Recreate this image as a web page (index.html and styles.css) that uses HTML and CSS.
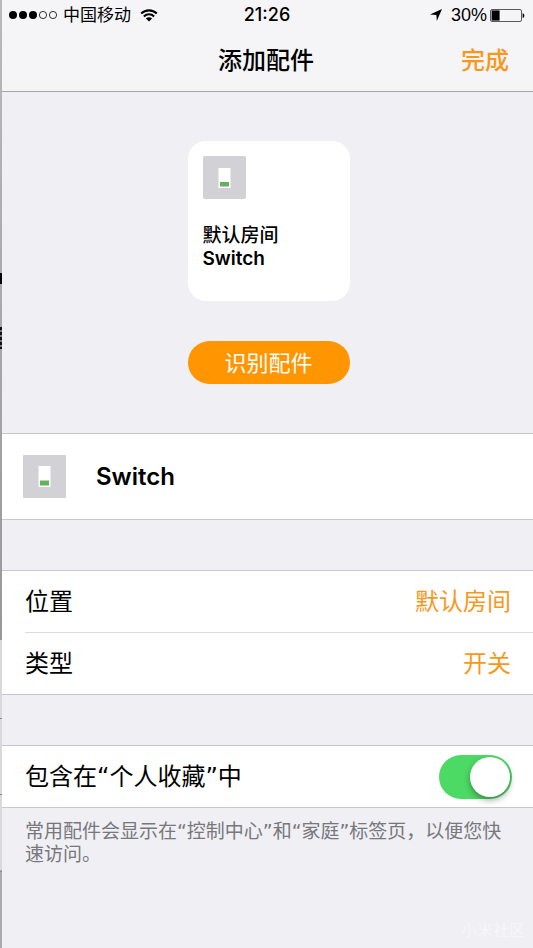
FILE: index.html
```html
<!DOCTYPE html>
<html lang="zh-CN">
<head>
<meta charset="utf-8">
<meta name="viewport" content="width=device-width, initial-scale=1">
<title>添加配件</title>
<link rel="stylesheet" href="styles.css">
</head>
<body>
<div class="screen">
  <header class="top">
    <div class="status">
      <div class="status-side">
        <svg class="signal" width="49" height="10" viewBox="0 0 49 10" aria-hidden="true">
          <g fill="#000"><circle cx="4" cy="5" r="4"/><circle cx="14" cy="5" r="4"/><circle cx="24" cy="5" r="4"/></g>
          <g fill="none" stroke="#000" stroke-width="0.8"><circle cx="34" cy="5" r="3.6"/><circle cx="44" cy="5" r="3.6"/></g>
        </svg>
        <span class="carrier">中国移动</span>
        <svg class="wifi" width="18" height="13" viewBox="0 0 18 13" aria-hidden="true">
          <g fill="none" stroke="#000" stroke-width="2.1">
            <path d="M1.2 4.6C5.5.3 12.5.3 16.8 4.6"/>
            <path d="M3.9 7.4c2.8-2.8 7.4-2.8 10.2 0"/>
          </g>
          <path d="M5.9 9.4c1.7-1.6 4.5-1.6 6.2 0L9 12.6z"/>
        </svg>
      </div>
      <time class="clock">21:26</time>
      <div class="status-side status-right">
        <svg class="locate" width="12" height="12" viewBox="0 0 12 12" aria-hidden="true"><path d="M12 0 6.8 12 6.4 5.9 0 5.4z"/></svg>
        <span class="percent">30%</span>
        <svg class="battery" width="35" height="13" viewBox="0 0 35 13" aria-hidden="true">
          <rect x="0.5" y="0.5" width="31" height="12" rx="1.5" fill="none" stroke="#333" stroke-width="0.8"/>
          <rect x="1.6" y="1.4" width="8" height="10.2"/>
          <path d="M32.6 4.2c2.3 0 2.3 4.6 0 4.6z"/>
        </svg>
      </div>
    </div>
    <nav class="nav">
      <h1 class="nav-title">添加配件</h1>
      <button class="done" type="button">完成</button>
    </nav>
  </header>

  <main>
    <section class="hero">
      <div class="card">
        <svg class="switch-icon" width="43" height="43" viewBox="0 0 43 43" aria-hidden="true">
          <rect width="43" height="43" rx="2" fill="#d1d1d6"/><rect x="15.5" y="12" width="12" height="20" fill="#fff"/><rect x="17" y="26" width="9" height="4.5" fill="#62b15c"/>
        </svg>
        <p class="card-text">默认房间<br><strong>Switch</strong></p>
      </div>
      <button class="identify" type="button">识别配件</button>
    </section>

    <section class="group accessory">
      <svg class="switch-icon" width="43" height="43" viewBox="0 0 43 43" aria-hidden="true">
        <rect width="43" height="43" rx="1" fill="#d1d1d6"/><rect x="15.5" y="11" width="12" height="21" fill="#fff"/><rect x="17" y="25.5" width="9" height="5" fill="#62b15c"/>
      </svg>
      <h2 class="accessory-name">Switch</h2>
    </section>

    <section class="group">
      <a class="row" href="#room"><span>位置</span><span class="value">默认房间</span></a>
      <a class="row" href="#type"><span>类型</span><span class="value">开关</span></a>
    </section>

    <section class="group">
      <div class="row">
        <label class="quoted" for="favorite">包含在“个人收藏”中</label>
        <input class="toggle" id="favorite" type="checkbox" role="switch" checked>
      </div>
    </section>
    <p class="note quoted">常用配件会显示在“控制中心”和“家庭”标签页，以便您快速访问。</p>
  </main>
  <footer class="mark">小米社区</footer>
</div>
</body>
</html>
```
FILE: styles.css
```css
* { box-sizing: border-box; }

body {
  margin: 0;
  color: #000;
  font-family: Inter, "Noto Sans CJK SC", sans-serif;
  font-size: 24px;
  line-height: 32px;
  /* sliver of the page behind the sheet */
  background:
    linear-gradient(#000, #000) 0 273px / 2px 11px no-repeat,
    repeating-linear-gradient(#111 0 3px, #777 3px 5px) 0 327px / 2px 22px no-repeat,
    linear-gradient(#888, #888) 0 718px / 2px 1px no-repeat,
    linear-gradient(#888, #888) 0 794px / 2px 1px no-repeat,
    linear-gradient(#b9b9bc, #98989b 640px, #d9d9dc 640px, #d9d9dc 870px, #77777a 871px, #acacaf 872px);
}

h1, h2, p { margin: 0; }

button {
  border: 0;
  padding: 0;
  background: none;
  font: inherit;
  cursor: pointer;
}

svg { display: block; flex: none; }

.screen {
  display: flex;
  flex-direction: column;
  min-height: 100vh;
  margin-left: 2px;
  background: #efeff4;
}

.top {
  background: #f5f5f7;
  border-bottom: 1px solid #a5a5a8;
}

.status {
  display: grid;
  grid-template-columns: 1fr auto 1fr;
  align-items: center;
  height: 30px;
  padding: 0 8px 0 7px;
  font-size: 17px;
  line-height: 24px;
}

.status-side { display: flex; align-items: center; }
.status-right { justify-content: flex-end; }
.carrier { margin: 0 9px 0 5px; }
.clock { font-size: 18px; font-weight: 500; }
.locate { margin-right: 9px; }
.percent { font-family: "Liberation Sans", sans-serif; font-size: 18px; }
.battery { margin-left: 3px; }

.nav {
  display: grid;
  grid-template-columns: 1fr auto 1fr;
  align-items: center;
  height: 61px;
  padding: 0 24px 0 21px;
}

.nav-title {
  grid-column: 2;
  font-size: 24px;
  font-weight: 500;
}

.done {
  justify-self: end;
  color: #f7981d;
  font-weight: 500;
}

.hero {
  display: flex;
  flex-direction: column;
  align-items: center;
  gap: 40px;
  padding: 49px 0 49px 2px;
}

.card {
  width: 162px;
  height: 160px;
  padding: 15px;
  border-radius: 18px;
  background: #fff;
}

.card-text {
  margin-top: 25px;
  font-size: 19px;
  font-weight: 500;
  line-height: 23px;
}

.card-text strong { font-weight: 600; }

.identify {
  width: 162px;
  height: 43px;
  border-radius: 22px;
  background: #ff9500;
  color: #fff;
  font-size: 22px;
}

.group {
  border: solid #c8c7cc;
  border-width: 1px 0;
  background: #fff;
}

.group + .group { margin-top: 50px; }

.accessory {
  display: flex;
  align-items: center;
  gap: 30px;
  height: 87px;
  padding: 0 21px;
}

.accessory-name {
  font-size: 24px;
  font-weight: 600;
}

.row {
  position: relative;
  display: flex;
  align-items: center;
  justify-content: space-between;
  min-height: 61px;
  padding: 0 22px 0 23px;
  color: inherit;
  text-decoration: none;
}

.row + .row {
  min-height: 62px;
  padding-top: 2px;
}

.row + .row::before {
  content: "";
  position: absolute;
  top: 0;
  right: 0;
  left: 23px;
  border-top: 1px solid #dcdce0;
}

.value { color: #f7981d; }

.quoted { font-family: "DejaVu Sans", "Noto Sans CJK SC", sans-serif; }

.toggle {
  appearance: none;
  display: flex;
  width: 73px;
  height: 44px;
  margin: 0 -1px 0 0;
  padding: 2px;
  border-radius: 22px;
  background: #e5e5ea;
}

.toggle::before {
  content: "";
  width: 40px;
  height: 40px;
  border-radius: 50%;
  background: #fff;
  box-shadow: 0 3px 6px rgba(0, 0, 0, 0.35);
}

.toggle:checked {
  justify-content: flex-end;
  background: #4cd964;
}

.note {
  padding: 12px 24px 0 23px;
  color: #77777c;
  font-size: 19px;
  line-height: 23px;
}

.mark {
  margin-top: auto;
  padding: 0 8px 6px;
  color: #f6f6f9;
  font-size: 16px;
  line-height: 24px;
  text-align: right;
}
```
